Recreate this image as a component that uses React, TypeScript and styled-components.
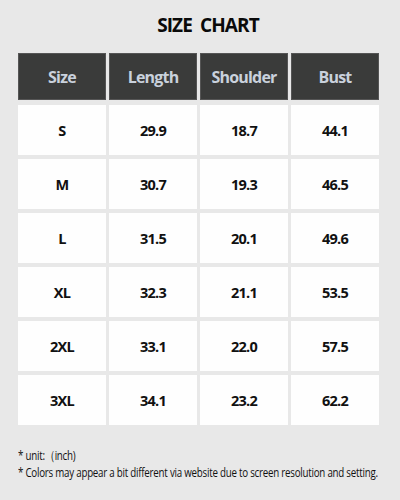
import styled, { createGlobalStyle } from 'styled-components'

const rows = [
  ['S', '29.9', '18.7', '44.1'],
  ['M', '30.7', '19.3', '46.5'],
  ['L', '31.5', '20.1', '49.6'],
  ['XL', '32.3', '21.1', '53.5'],
  ['2XL', '33.1', '22.0', '57.5'],
  ['3XL', '34.1', '23.2', '62.2'],
]

const headers = ['Size', 'Length', 'Shoulder', 'Bust']

function App() {
  return (
    <Page>
      <GlobalStyle />
      <Title>SIZE&nbsp; CHART</Title>
      <Table>
        {headers.map((h) => (
          <HeadCell key={h}>{h}</HeadCell>
        ))}
        {rows.map((row) =>
          row.map((value, i) => <Cell key={row[0] + i}>{value}</Cell>)
        )}
      </Table>
      <Notes>
        <Note>* unit:（inch)</Note>
        <Note>* Colors may appear a bit different via website due to screen resolution and setting.</Note>
      </Notes>
    </Page>
  )
}

const GlobalStyle = createGlobalStyle`
  body {
    margin: 0;
    background: #e8e8e8;
  }
`

const Page = styled.div`
  width: 400px;
  height: 500px;
  box-sizing: border-box;
  padding: 12px 20px 0 18px;
  background: #e8e8e8;
  font-family: "Open Sans", "Noto Sans", sans-serif;
  overflow: hidden;
`

const Title = styled.h1`
  margin: 0 0 14px;
  padding-left: 18px;
  text-align: center;
  font-size: 19px;
  font-weight: 700;
  letter-spacing: -0.9px;
  color: #0a0a0a;
  line-height: 27px;
`

const Table = styled.div`
  display: grid;
  grid-template-columns: repeat(4, 88px);
  grid-template-rows: 48px repeat(6, 50px);
  column-gap: 3px;
  row-gap: 4px;
`

const HeadCell = styled.div`
  display: flex;
  align-items: center;
  justify-content: center;
  background: #3a3b3a;
  border: 1px solid #555;
  box-sizing: border-box;
  margin-bottom: 1px;
  color: #c9d1dc;
  font-size: 16px;
  font-weight: 700;
  letter-spacing: -0.8px;
`

const Cell = styled.div`
  display: flex;
  align-items: center;
  justify-content: center;
  background: #fefefe;
  color: #111;
  font-size: 14.5px;
  font-weight: 700;
  letter-spacing: -0.7px;
`

const Notes = styled.div`
  margin-top: 22px;
  display: flex;
  flex-direction: column;
`

const Note = styled.div`
  width: 470px;
  font-size: 12.5px;
  color: #111;
  letter-spacing: -0.3px;
  line-height: 17px;
  white-space: nowrap;
  transform: scaleX(0.78);
  transform-origin: left center;
`

export default App
